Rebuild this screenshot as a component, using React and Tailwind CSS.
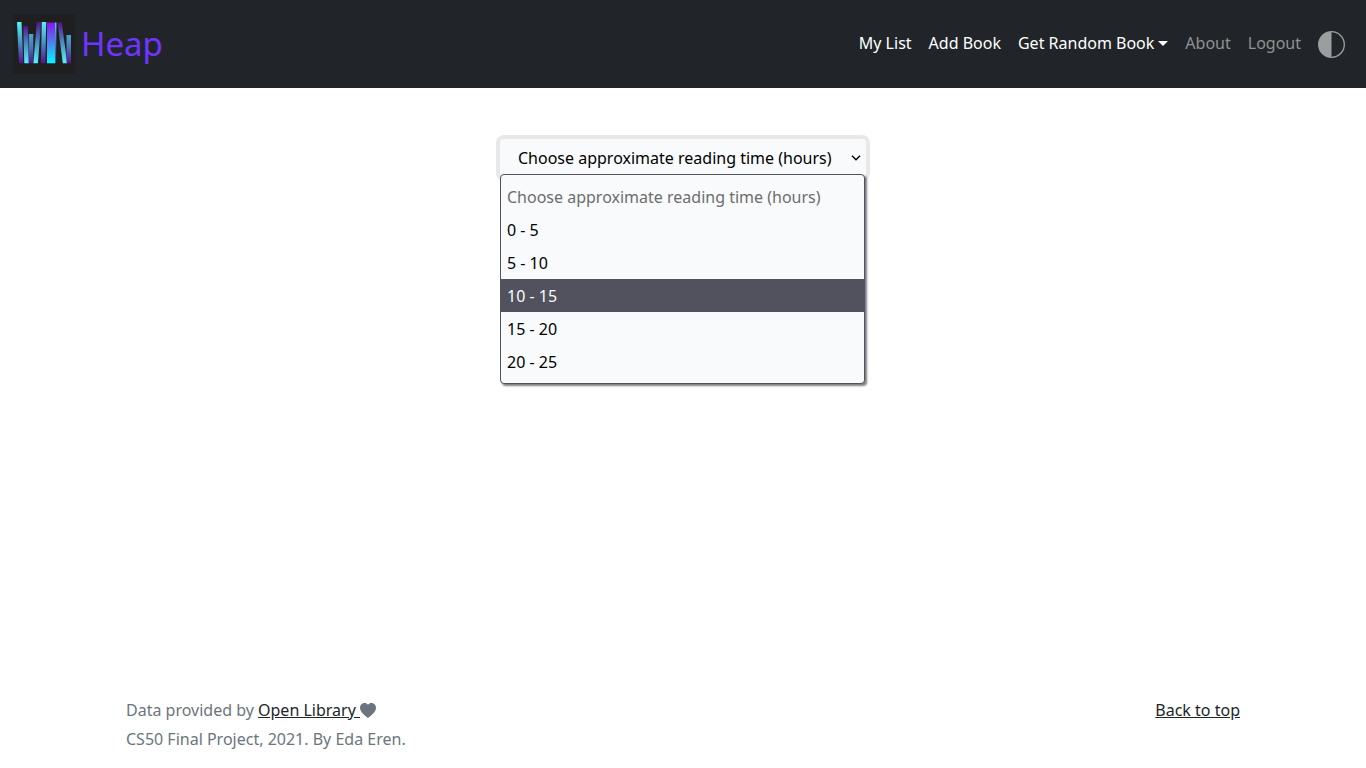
import { useState } from "react";

const PLACEHOLDER = "Choose approximate reading time (hours)";
const RANGES = ["0 - 5", "5 - 10", "10 - 15", "15 - 20", "20 - 25"];

function Logo() {
  return (
    <svg viewBox="0 0 62 60" className="h-[60px] w-[62px] shrink-0" aria-hidden="true">
      <defs>
        <linearGradient id="down" x1="0" y1="0" x2="0" y2="1">
          <stop offset="0" stopColor="#52f5f7" />
          <stop offset="0.5" stopColor="#4b8fc4" />
          <stop offset="1" stopColor="#54128f" />
        </linearGradient>
        <linearGradient id="up" x1="0" y1="0" x2="0" y2="1">
          <stop offset="0" stopColor="#54128f" />
          <stop offset="0.5" stopColor="#4b8fc4" />
          <stop offset="1" stopColor="#52f5f7" />
        </linearGradient>
        <linearGradient id="short" x1="0" y1="0" x2="0" y2="1">
          <stop offset="0" stopColor="#4ba6cc" />
          <stop offset="0.45" stopColor="#4b76b8" />
          <stop offset="1" stopColor="#54128f" />
        </linearGradient>
        <linearGradient id="wide" x1="0" y1="0" x2="0" y2="1">
          <stop offset="0" stopColor="#8f10f0" />
          <stop offset="0.5" stopColor="#4c82f2" />
          <stop offset="1" stopColor="#00fbff" />
        </linearGradient>
      </defs>
      <rect width="62" height="60" rx="4" fill="#1f1f1f" />
      <path d="M4 8h4.500l1.900 41.200h-4.400z" fill="url(#down)" />
      <path d="M10.300 12h4.500l1 37.200h-4.500z" fill="url(#up)" />
      <path d="M15.800 20h4.500v29.200h-4.500z" fill="url(#short)" />
      <path d="M23.800 8h4.300l-3.200 41.200h-4.500z" fill="url(#up)" />
      <path d="M28.800 8h4.400l-.8 41.200h-4.500z" fill="url(#down)" />
      <path d="M34 8.500h8.200l.5 40.700h-8.700z" fill="url(#wide)" />
      <path d="M42.200 8.500h1.200l-.3 40.700h-.8z" fill="url(#down)" />
      <path d="M44.500 8.500h4.200l5.600 40.700h-4.500z" fill="url(#up)" />
      <path d="M53.500 21h4.500v28.200h-4.500z" fill="url(#short)" />
    </svg>
  );
}

function Header() {
  return (
    <header className="flex h-[88px] items-center justify-between bg-[#212529] px-[13px]">
      <a href="#home" className="flex items-center gap-1.5 text-[#6f35ff]">
        <Logo />
        <span className="text-[33px] leading-[60px]">Heap</span>
      </a>
      <nav className="mr-2 flex items-center gap-[17px] text-white">
        <div className="flex items-center gap-[17px] pb-0.5">
          <a href="#list">My List</a>
          <a href="#add">Add Book</a>
          <button type="button" className="flex items-center gap-1">
            Get Random Book
            <svg viewBox="0 0 10 5" className="h-[5px] w-[10px]" aria-hidden="true">
              <path d="M0 0h10L5 5z" fill="currentColor" />
            </svg>
          </button>
          <a href="#about" className="text-[#909294]">About</a>
          <a href="#logout" className="text-[#909294]">Logout</a>
        </div>
        <button type="button" aria-label="Toggle theme" className="text-[#9c9d9f]">
          <svg viewBox="0 0 16 16" className="h-[27px] w-[27px]" aria-hidden="true">
            <path d="M8 .8v14.400A7.200 7.200 0 0 0 8 .8zM8 16A8 8 0 1 1 8 0a8 8 0 0 1 0 16z" fill="currentColor" fillRule="evenodd" />
          </svg>
        </button>
      </nav>
    </header>
  );
}

function ReadingTime() {
  const [value, setValue] = useState("");
  const [active, setActive] = useState(2);
  return (
    <div className="relative w-[366px]">
      <select
        aria-label="Reading time"
        value={value}
        onChange={(e) => setValue(e.target.value)}
        className="block h-[38px] w-full appearance-none rounded-sm bg-[#f9fafc] pr-8 pl-[18px] text-black ring-4 ring-[#e8e8e8] outline-none"
      >
        <option value="" disabled>{PLACEHOLDER}</option>
        {RANGES.map((r) => <option key={r}>{r}</option>)}
      </select>
      <svg viewBox="0 0 10 6" className="pointer-events-none absolute top-4 right-[5px] h-1.5 w-2.5" aria-hidden="true">
        <path d="M1 .8l4 4 4-4" fill="none" stroke="#000" strokeWidth="1.5" />
      </svg>
      <ul
        role="listbox"
        aria-label="Reading time options"
        className="absolute top-[35px] left-0 w-[365px] rounded-sm border border-[#52525e] bg-[#f9fafc] py-[5px] leading-[31px] text-black shadow-[2px_2px_2px_rgba(0,0,0,0.5)]"
      >
        <li role="option" aria-selected="false" aria-disabled="true" className="px-1.5 pt-0.5 text-[#6d6d6d]">{PLACEHOLDER}</li>
        {RANGES.map((r, i) => (
          <li
            key={r}
            role="option"
            aria-selected={i === active}
            onMouseEnter={() => setActive(i)}
            onClick={() => setValue(r)}
            className={i === active ? "bg-[#52525e] px-1.5 pt-0.5 text-[#f9fafc]" : "px-1.5 pt-0.5"}
          >
            {r}
          </li>
        ))}
      </ul>
    </div>
  );
}

function Footer() {
  return (
    <footer className="flex items-start justify-between px-[126px] pb-[14px] leading-[29px] text-[#6c757d]">
      <div>
        <p className="flex items-center">
          <span className="whitespace-pre">Data provided by </span>
          <a href="#library" className="whitespace-pre text-[#212529] underline">Open Library </a>
          <svg viewBox="0 0 16 15" className="h-[15px] w-4" aria-hidden="true">
            <path d="M8 15C5.500 13 0 9.500 0 4.800 0 .3 5.500-1.500 8 1.700 10.500-1.500 16 .3 16 4.800 16 9.500 10.500 13 8 15z" fill="currentColor" />
          </svg>
        </p>
        <p>CS50 Final Project, 2021. By Eda Eren.</p>
      </div>
      <a href="#top" className="text-[#212529] underline">Back to top</a>
    </footer>
  );
}

export default function App() {
  return (
    <div id="top" className="flex min-h-screen flex-col bg-white font-['Noto_Sans','Open_Sans',sans-serif] text-base">
      <Header />
      <main className="flex flex-1 justify-center pt-[51px]">
        <ReadingTime />
      </main>
      <Footer />
    </div>
  );
}
